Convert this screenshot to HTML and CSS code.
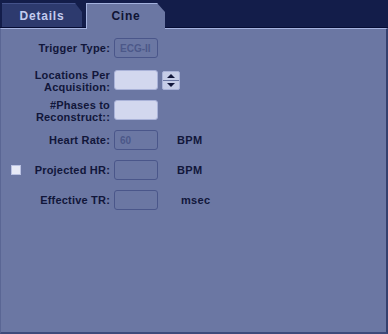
FILE: index.html
```html
<!DOCTYPE html>
<html lang="en">
<head>
  <meta charset="UTF-8" />
  <title>Cine</title>
  <link rel="stylesheet" href="styles.css">
</head>
<body>
  <div class="tabs">
    <div class="tab">Details</div>
    <div class="tab active">Cine</div>
  </div>
  <div class="panel">
    <div class="form">
      <div class="row">
        <label class="label">Trigger Type:</label>
        <div class="field disabled">ECG-II</div>
      </div>
      <div class="row">
        <label class="label two">Locations Per<br>Acquisition:</label>
        <div class="field filled"></div>
        <div class="spinner">
          <div class="spin up"></div>
          <div class="spin down"></div>
        </div>
      </div>
      <div class="row">
        <label class="label two">#Phases to<br>Reconstruct::</label>
        <div class="field filled"></div>
      </div>
      <div class="row">
        <label class="label">Heart Rate:</label>
        <div class="field disabled">60</div>
        <span class="unit">BPM</span>
      </div>
      <div class="row">
        <label class="label with-check"><span class="check"></span>Projected HR:</label>
        <div class="field"></div>
        <span class="unit">BPM</span>
      </div>
      <div class="row">
        <label class="label">Effective TR:</label>
        <div class="field"></div>
        <span class="unit msec">msec</span>
      </div>
    </div>
  </div>
</body>
</html>
```

FILE: styles.css
```css
body {
  margin: 0;
  width: 388px;
  height: 334px;
  background: #131d4a;
  font-family: "Liberation Sans", Arial, sans-serif;
  font-weight: bold;
  font-size: 11px;
  overflow: hidden;
}
.tabs {
  height: 28px;
  box-sizing: border-box;
  border-bottom: 1px solid #050c33;
  display: flex;
  align-items: flex-end;
  padding-left: 2px;
  gap: 4px;
}
.tab {
  width: 80px;
  height: 23px;
  background: #2d3a6e;
  color: #c3cbef;
  font-size: 12px;
  letter-spacing: 0.8px;
  display: flex;
  align-items: center;
  justify-content: center;
  border-top: 1px solid #44528a;
  clip-path: polygon(0 0, 73px 0, 100% 9px, 100% 100%, 0 100%);
}
.tab.active {
  width: 79px;
  height: 26px;
  margin-bottom: -2px;
  background: #6b77a3;
  color: #0f1433;
  border-top: 1px solid #a4b2df;
  border-left: 1px solid #a4b2df;
  box-sizing: border-box;
  padding-bottom: 2px;
  clip-path: polygon(0 0, 71px 0, 100% 9px, 100% 100%, 0 100%);
}
.panel {
  height: 306px;
  box-sizing: border-box;
  background: #6b77a3;
  border-top: 1px solid #a4b2df;
  border-right: 2px solid #34406e;
  border-bottom: 2px solid #3e4a7a;
  border-left: 1px solid #5a6694;
  padding-top: 9px;
}
.form {
  display: flex;
  flex-direction: column;
  gap: 10px;
}
.row {
  display: flex;
  align-items: center;
  height: 20px;
}
.row:first-child {
  margin-bottom: 2px;
}
.label {
  width: 113px;
  padding-right: 4px;
  box-sizing: border-box;
  text-align: right;
  color: #11163a;
  line-height: 12px;
  letter-spacing: 0.2px;
}
.label.two {
  margin-top: 2px;
}
.with-check {
  display: flex;
  justify-content: space-between;
  align-items: center;
  padding-left: 10px;
}
.check {
  width: 10px;
  height: 10px;
  background: #e6e9f6;
  border: 1px solid #b9c1e2;
  box-sizing: border-box;
}
.field {
  width: 44px;
  height: 20px;
  box-sizing: border-box;
  border: 1px solid #4a568a;
  border-radius: 3px;
  font-size: 10px;
  color: #4c5889;
  padding: 4px 0 0 5px;
}
.field.filled {
  background: #d2d7ee;
  border-color: #a9b2d8;
}
.spinner {
  margin-left: 4px;
  width: 18px;
  height: 19px;
  display: flex;
  flex-direction: column;
  border: 1px solid #a9b2d8;
  border-radius: 2px;
  box-sizing: border-box;
  background: #c6cde8;
}
.spin {
  flex: 1;
  display: flex;
  align-items: center;
  justify-content: center;
}
.spin.up {
  border-bottom: 1px solid #6b77a3;
}
.spin.up::before {
  content: "";
  border-left: 4px solid transparent;
  border-right: 4px solid transparent;
  border-bottom: 4px solid #11163a;
}
.spin.down::before {
  content: "";
  border-left: 4px solid transparent;
  border-right: 4px solid transparent;
  border-top: 4px solid #11163a;
}
.unit {
  margin-left: 19px;
  color: #11163a;
  letter-spacing: 0.3px;
}
.unit.msec {
  margin-left: 23px;
}
```
